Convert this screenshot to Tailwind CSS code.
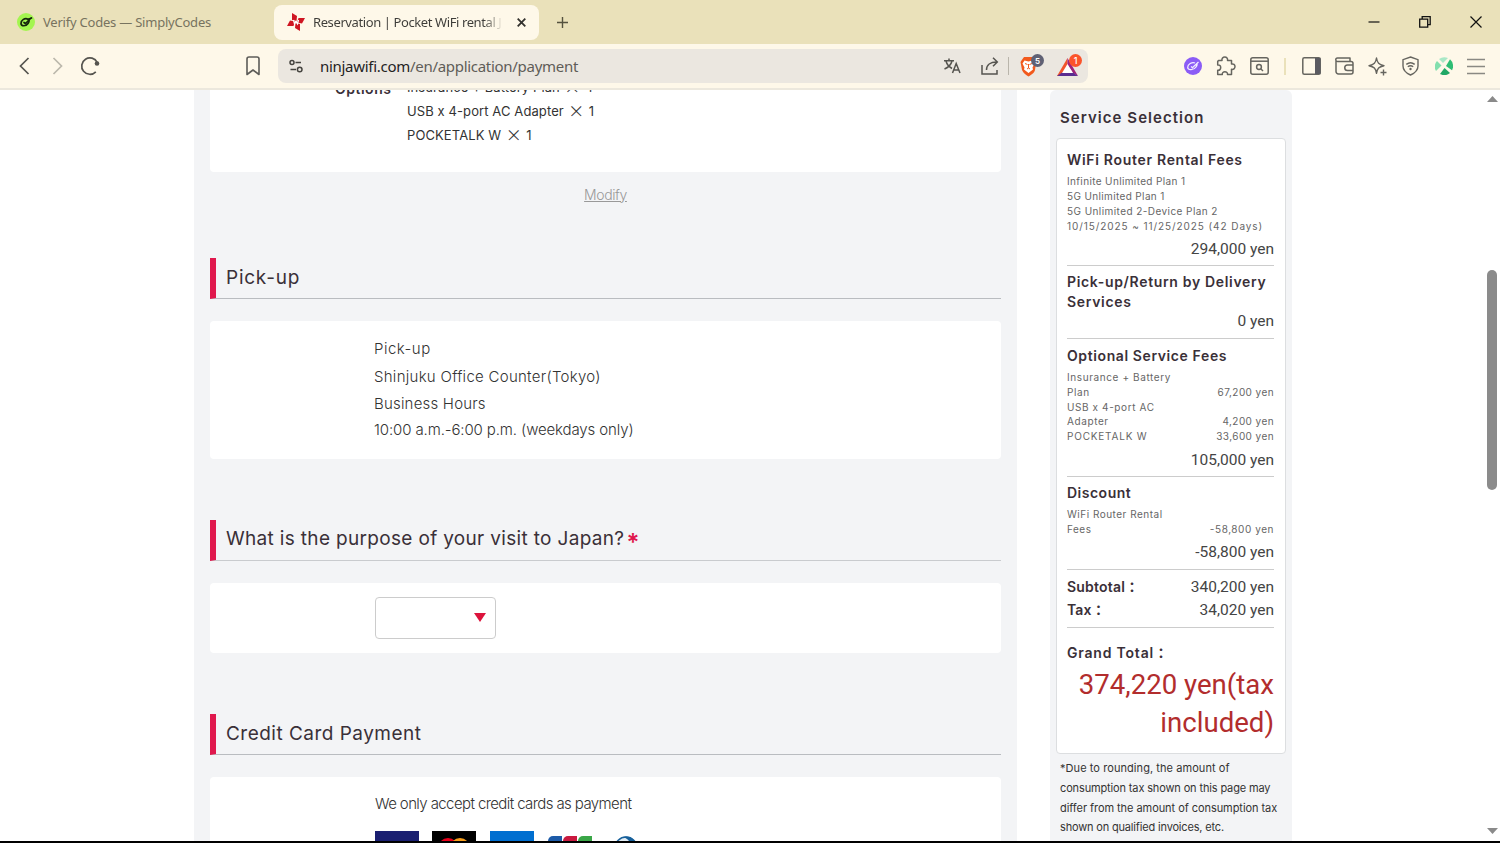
<!DOCTYPE html>
<html lang="en">
  <head>
    <meta charset="UTF-8" />
    <meta name="viewport" content="width=device-width, initial-scale=1.0" />
    <title>Reservation | Pocket WiFi rental Japan</title>
    <script src="https://cdn.jsdelivr.net/npm/@tailwindcss/browser@4"></script>
  </head>

  <body class="h-[843px] w-[1500px] overflow-hidden bg-white font-['Inter','Noto_Sans_CJK_JP',sans-serif]">
    <div class="flex h-[843px] flex-col border-b-2 border-black">

      <!-- Tab strip -->
      <div class="flex h-11 shrink-0 items-center bg-[#eae1ba] font-['Noto_Sans',sans-serif] text-[13px]">
        <div class="flex w-[274px] items-center pl-[17px]">
          <svg class="h-[18px] w-[18px]" viewBox="0 0 18 18">
            <circle cx="9" cy="9" r="9" fill="#a4f550" />
            <g fill="none" stroke="#15250c" stroke-width="1.7" stroke-linecap="round">
              <path d="M11 6.200C8 4.500 4 7 4 10.500c0 3 5 3 7 0 1-1.500 1.500-3 .5-4.300" />
              <path d="M7 9.500l1.500 1.200L14 5M12 6l2.500-1" />
            </g>
          </svg>
          <span class="ml-2 pt-px whitespace-nowrap tracking-[-0.22px] text-[#77735f]">Verify Codes — SimplyCodes</span>
        </div>
        <div class="flex h-[35px] w-[265px] items-center rounded-lg bg-[#fef8e9] pl-[13px]">
          <svg class="h-[18px] w-[18px]" viewBox="0 0 18 18">
            <g fill="#cf1522">
              <path d="M5 0l5 3-.5 5L5 7z" />
              <path d="M18 5l-3 5.500-5-1L11.500 5z" />
              <path d="M13 18l-5-3 .5-5 4.500 1z" />
              <path d="M0 13l3-5.500 5 1L6.500 13z" />
            </g>
            <path d="M6.500 7l1 4L9 8.500l1.500 2.500 1-4" fill="none" stroke="#fff" stroke-width="1.200" />
          </svg>
          <span class="ml-2 w-[190px] overflow-hidden pt-px whitespace-nowrap bg-linear-to-r from-[#3d3c38] from-90% to-transparent bg-clip-text tracking-[-0.4px] text-transparent">Reservation | Pocket WiFi rental J</span>
          <svg class="ml-[14px] h-[9px] w-[9px]" viewBox="0 0 9 9" stroke="#33322e" stroke-width="1.800"><path d="M.7.7l7.600 7.600M8.300.7L.7 8.300" /></svg>
        </div>
        <svg class="ml-[18px] h-[11px] w-[11px]" viewBox="0 0 11 11" stroke="#55523f" stroke-width="1.400"><path d="M5.500 0v11M0 5.500h11" /></svg>
        <div class="ml-auto flex items-center gap-[39px] pr-[18px]">
          <svg class="h-3 w-3" viewBox="0 0 12 12" stroke="#111" stroke-width="1.200"><path d="M.5 6h11" /></svg>
          <svg class="h-3 w-3" viewBox="0 0 12 12" fill="none" stroke="#111" stroke-width="1.300"><path d="M.7 3.200h8v8h-8zM3.200 3V.7h8v8H9" /></svg>
          <svg class="h-3 w-3" viewBox="0 0 12 12" stroke="#111" stroke-width="1.200"><path d="M.5.5l11 11M11.500.5l-11 11" /></svg>
        </div>
      </div>

      <!-- Toolbar -->
      <div class="flex h-[46px] shrink-0 items-center border-b-2 border-[#ece8dd] bg-[#fef8e9]">
        <div class="flex w-[278px] items-center">
          <svg class="ml-[19px] h-5 w-[11px]" viewBox="0 0 11 20" fill="none" stroke="#55544f" stroke-width="1.700"><path d="M9.500 2l-8 8 8 8" /></svg>
          <svg class="ml-[22px] h-5 w-[11px]" viewBox="0 0 11 20" fill="none" stroke="#bcb8ac" stroke-width="1.700"><path d="M1.500 2l8 8-8 8" /></svg>
          <svg class="ml-[17px] h-5 w-5" viewBox="0 0 20 20" fill="none" stroke="#55544f" stroke-width="1.700"><path d="M15.800 15.800A8.200 8.200 0 1 1 17.300 6.500" /><circle cx="17" cy="7.500" r="2.300" fill="#55544f" stroke="none" /></svg>
          <svg class="ml-[146px] h-5 w-[14px]" viewBox="0 0 14 20" fill="none" stroke="#5d5c58" stroke-width="1.600" stroke-linejoin="round"><path d="M1 3a2 2 0 0 1 2-2h8a2 2 0 0 1 2 2v15.500L7 14l-6 4.500z" /></svg>
        </div>

        <!-- Address bar -->
        <div class="flex h-[34px] w-[810px] items-center rounded-lg bg-[#ebe7e0]">
          <svg class="ml-[11px] h-[14px] w-[14px]" viewBox="0 0 14 14" fill="none" stroke="#45443f" stroke-width="1.500"><circle cx="3" cy="3.500" r="2" /><path d="M6.500 3.500H12M1.500 10.500H7" /><circle cx="10.700" cy="10.500" r="2.300" /></svg>
          <span class="ml-[17px] whitespace-nowrap font-['Noto_Sans',sans-serif] text-[15px] tracking-[-0.29px] text-[#5f5d58]"><span class="text-[#24231f]">ninjawifi.com</span>/en/application/payment</span>
          <div class="ml-auto flex items-center">
            <svg class="h-4 w-[17px]" viewBox="0 0 17 16" fill="none" stroke="#55544f" stroke-width="1.500"><path d="M0 2.700h10M5 .5v2M2 3c1 4 3.500 6 6 7.500M8 3C7 7 4 9.500.5 11M8.500 15l3.700-9.500L16 15M9.800 12h5" /></svg>
            <svg class="ml-5 h-[18px] w-[18px]" viewBox="0 0 18 18" fill="none" stroke="#55544f" stroke-width="1.500"><path d="M1 8v9h15v-4M5.500 13c0-5 4-8 10-8M12 .8L16.300 5 12 9.200" /></svg>
            <div class="ml-[9px] h-[18px] w-px bg-[#b9b5ab]"></div>
            <div class="relative ml-[11px] h-6 w-[18px]">
              <svg class="h-6 w-[18px]" viewBox="0 0 18 24"><path d="M4 3h9l3 3 0 3-1 7c-.5 3-4 5-6.500 6.500C6 21 3 19 2 16L.500 8 1.800 6z" fill="#f25a1d" /><path d="M4.500 6.500l4 1 4-1 2 3-2 4 .5 2-4.500 3.500L4 15.500l.5-2-2-4z" fill="#fff" /><path d="M5 9.500l2.500 1M12 9.500l-2.500 1M8.500 10v4l-1.500 1M8.500 14l1.500 1" stroke="#f25a1d" fill="none" /></svg>
              <span class="absolute top-0 left-[11px] flex h-[13px] w-[13px] items-center justify-center rounded-full bg-[#5f6174] text-[8px] font-semibold text-white">5</span>
            </div>
            <div class="relative mr-[10px] ml-[19px] h-6 w-[21px]">
              <svg class="h-6 w-[21px]" viewBox="0 0 21 24"><path d="M10.500 4L0 22h5l5.500-10z" fill="#f2552c" /><path d="M10.500 4L21 22l-5-3-5.500-8z" fill="#a0237a" /><path d="M0 22h21l-5-3.500H5z" fill="#5a2d91" /><path d="M10.500 10L5 19h11z" fill="#fff" /></svg>
              <span class="absolute top-0 left-[12px] flex h-[13px] w-[13px] items-center justify-center rounded-full bg-[#fb542b] text-[9px] font-medium text-white">1</span>
            </div>
          </div>
        </div>

        <!-- Extensions -->
        <div class="ml-auto flex items-center pr-[15px]">
          <svg class="h-[18px] w-[18px]" viewBox="0 0 18 18"><circle cx="9" cy="9" r="9" fill="#8b5cf6" /><path d="M11 6C8 4.500 3.500 7.500 3.700 10.500c.3 3 6 3 8.300-.5 1-1.500 1.500-3 .5-3.800M7 9.500l1.500 1.200L14.500 5" fill="none" stroke="#f3edff" stroke-width="1.300" /></svg>
          <svg class="ml-[14px] h-[21px] w-5" viewBox="0 0 20 21" fill="none" stroke="#66655f" stroke-width="1.500" stroke-linejoin="round"><path d="M2.500 4.500H6C5.500 2.500 7 1 8.800 1s3.200 1.500 2.700 3.500h4V8c2-.5 3.500.8 3.500 2.600s-1.500 3.200-3.500 2.700v5.200h-4c.3-1.800-1-2.800-2.600-2.800S6 16.700 6.300 18.500H1.700v-4.300c2 .3 3-1 3-2.600s-1-2.900-3-2.600V5.500z" /></svg>
          <svg class="ml-[14px] h-[18px] w-[19px]" viewBox="0 0 19 18" fill="none" stroke="#66655f" stroke-width="1.500"><rect x=".8" y=".8" width="17.400" height="16.400" rx="2" /><path d="M1 4.200h17" /><circle cx="9" cy="10" r="2.400" /><path d="M11 12l2 2" /></svg>
          <div class="ml-[15px] h-[17px] w-[2px] bg-[#eae1ba]"></div>
          <svg class="ml-4 h-[18px] w-[19px]" viewBox="0 0 19 18"><rect x=".8" y=".8" width="17.400" height="16.400" rx="1.500" fill="none" stroke="#66655f" stroke-width="1.500" /><path d="M13 1h5.500v16H13z" fill="#5a5a60" /></svg>
          <svg class="ml-[14px] h-[18px] w-[19px]" viewBox="0 0 19 18" fill="none" stroke="#66655f" stroke-width="1.500" stroke-linejoin="round"><path d="M1 3v11.500A2.500 2.500 0 0 0 3.500 17H16a2 2 0 0 0 2-2V6.500a2 2 0 0 0-2-2H2.500A1.500 1.500 0 0 1 2.500 1H15v3M18 8h-5.500a2.500 2.500 0 0 0 0 5.500H18" /></svg>
          <svg class="ml-[14px] h-[19px] w-[19px]" viewBox="0 0 19 19" fill="none" stroke="#66655f" stroke-width="1.400" stroke-linejoin="round"><path d="M8.500 1c.8 5 2.300 6.500 7.500 7.700-5.200 1-6.700 2.600-7.500 7.600C7.700 11.300 6.200 9.700 1 8.700 6.200 7.500 7.700 6 8.500 1zM15.500 12.500v6M12.500 15.500h6" /></svg>
          <svg class="ml-[15px] h-5 w-[17px]" viewBox="0 0 17 20" fill="none" stroke="#66655f" stroke-width="1.400"><path d="M8.500 1l7.500 2.700V10c0 4-3 7-7.500 9C4 17 1 14 1 10V3.700zM4.300 8.400c2.500-2 6-2 8.400 0M5.800 10.800c1.600-1.300 3.800-1.300 5.400 0" /><circle cx="8.500" cy="13" r="1.200" fill="#66655f" stroke="none" /></svg>
          <svg class="ml-4 h-[18px] w-[18px]" viewBox="0 0 18 18"><path d="M4 2a9 9 0 0 1 9-1L8 6z" fill="#a9e8c6" /><path d="M15 2.300a9 9 0 0 1 2 11L11 9z" fill="#2fbd74" /><path d="M9.500 11l5.500 5a9 9 0 0 1-10 1z" fill="#20a866" /><path d="M2 4l4.500 4.500L1 14a9 9 0 0 1 1-10z" fill="#83dfae" /></svg>
          <svg class="ml-[14px] h-[17px] w-[18px]" viewBox="0 0 18 17" stroke="#8a8983" stroke-width="1.700"><path d="M0 1.500h18M0 8.500h18M0 15.500h18" /></svg>
        </div>
      </div>

      <!-- Page -->
      <div class="flex min-h-0 flex-1 overflow-hidden text-[#333]">
        <main class="ml-[194px] w-[823px] shrink-0 bg-[#f3f4f6] px-4">
          <div class="h-[82px] overflow-hidden rounded-b bg-white">
            <div class="-mt-[15px] flex text-[13px] leading-[24px]">
              <div class="w-[197px] pl-[125px] text-sm leading-[27px] font-semibold tracking-[0.5px] text-[#3a3038]">Options</div>
              <div class="whitespace-nowrap tracking-[0.1px]">
                <p>Insurance + Battery Plan<span class="inline-block h-6 w-[25px] text-center align-top text-2xl leading-[22px] font-extralight">×</span>4</p>
                <p>USB x 4-port AC Adapter<span class="inline-block h-6 w-[25px] text-center align-top text-2xl leading-[22px] font-extralight">×</span>1</p>
                <p>POCKETALK W<span class="inline-block h-6 w-[25px] text-center align-top text-2xl leading-[22px] font-extralight">×</span>1</p>
              </div>
            </div>
          </div>
          <div class="mt-[11px] text-center text-sm leading-6 font-light tracking-[-0.4px] text-[#999] underline">Modify</div>

          <h2 class="mt-[51px] h-[41px] border-b border-l-6 border-b-[#b9bcc0] border-l-[#e0184d] pl-[10px] text-[19px] leading-[39px] tracking-[0.75px] text-[#3a3038]">Pick-up</h2>
          <div class="mt-[22px] h-[138px] rounded bg-white pt-[14px] pl-[164px] text-[15px] leading-[27px] font-light">
            <p class="tracking-[0.5px]">Pick-up</p>
            <p class="pt-px tracking-[0.28px]">Shinjuku Office Counter(Tokyo)</p>
            <p class="tracking-[0.2px]">Business Hours</p>
            <p class="leading-[26px] tracking-[-0.12px]">10:00 a.m.-6:00 p.m. (weekdays only)</p>
          </div>

          <h2 class="mt-[61px] flex h-[41px] border-b border-l-6 border-b-[#c9cbce] border-l-[#e0184d] pl-[10px] text-[19px] leading-[38px] tracking-[0.33px] text-[#3a3038]">What is the purpose of your visit to Japan?<span class="ml-0.5 pt-[3px] text-2xl leading-[39px] font-semibold text-[#e0184d]">*</span></h2>
          <div class="mt-[22px] h-[70px] rounded bg-white pt-[14px] pl-[165px]">
            <div class="flex h-[42px] w-[121px] items-center justify-end rounded border border-[#ccc] pr-[9px] pb-px">
              <svg class="h-[9px] w-3" viewBox="0 0 12 9" fill="#dc143c"><path d="M0 0h12L6 9z" /></svg>
            </div>
          </div>

          <h2 class="mt-[61px] h-[41px] border-b border-l-6 border-b-[#b9bcc0] border-l-[#e0184d] pl-[10px] text-[19px] leading-[39px] tracking-[0.48px] text-[#3a3038]">Credit Card Payment</h2>
          <div class="mt-[22px] h-[200px] rounded bg-white pt-[13px] pl-[165px]">
            <p class="text-[15px] leading-[27px] font-light tracking-[-0.6px]">We only accept credit cards as payment</p>
            <div class="mt-[14px] flex gap-[13px]">
              <div class="h-7 w-11 bg-[#1a1f71]"></div>
              <svg class="h-7 w-11" viewBox="0 0 44 28"><path d="M0 0h44v28H0z" /><circle cx="16" cy="17" r="10" fill="#eb001b" /><circle cx="28" cy="17" r="10" fill="#f79e1b" /></svg>
              <div class="ml-px h-7 w-11 bg-[#016fd0]"></div>
              <svg class="ml-px h-7 w-11" viewBox="0 0 44 28"><path d="M5 5h9v22H0V10a5 5 0 0 1 5-5z" fill="#1d5ba8" /><path d="M20 5h9v22H15V10a5 5 0 0 1 5-5z" fill="#c9193f" /><path d="M35 5h9v22H30V10a5 5 0 0 1 5-5z" fill="#3aa647" /></svg>
              <svg class="h-7 w-11" viewBox="0 0 44 28"><circle cx="21" cy="17" r="11" fill="#e4eef5" stroke="#17609b" stroke-width="1.500" /><path d="M18 6a11 11 0 0 1 14 11h-6c0-5-2-9-8-11z" fill="#17609b" /></svg>
            </div>
          </div>
        </main>

        <!-- Service selection -->
        <aside class="ml-[33px] h-[800px] w-[242px] shrink-0 rounded-t-md bg-[#f3f4f6] px-[6px] text-[#3a3038]">
          <h3 class="h-12 pt-[18px] pl-1 text-[15px] leading-5 font-semibold tracking-[1.050px]">Service Selection</h3>
          <div class="h-[616px] w-[230px] rounded border border-[#dcdee0] bg-white pr-[11px] pl-[10px]">
            <section class="h-[127px] border-b border-[#ccc] pt-[11px]">
              <h4 class="text-sm leading-5 font-semibold tracking-[0.7px] whitespace-nowrap">WiFi Router Rental Fees</h4>
              <div class="mt-1 text-[10px] leading-[15px] whitespace-nowrap text-[#666]">
                <p class="tracking-[0.36px]">Infinite Unlimited Plan 1</p>
                <p class="tracking-[0.36px]">5G Unlimited Plan 1</p>
                <p class="tracking-[0.43px]">5G Unlimited 2-Device Plan 2</p>
                <p class="tracking-[0.92px]">10/15/2025 ~ 11/25/2025 (42 Days)</p>
              </div>
              <p class="mt-[3px] text-right font-['Roboto'] text-[15.500px] leading-[25px] text-[#444]">294,000 yen</p>
            </section>
            <section class="h-[73px] border-b border-[#ccc] pt-[6px]">
              <h4 class="text-sm leading-5 font-semibold tracking-[0.67px] whitespace-nowrap">Pick-up/Return by Delivery<br />Services</h4>
              <p class="-mt-[3px] text-right font-['Roboto'] text-[15.500px] leading-6 text-[#444]">0 yen</p>
            </section>
            <section class="h-[138px] border-b border-[#ccc] pt-[7px]">
              <h4 class="text-sm leading-5 font-semibold tracking-[0.6px]">Optional Service Fees</h4>
              <div class="mt-1 grid grid-cols-[1fr_auto] items-end text-[10px] leading-[14.800px] whitespace-nowrap text-[#666]">
                <p class="tracking-[0.6px]">Insurance + Battery<br />Plan</p><p class="text-right tracking-[0.42px]">67,200 yen</p>
                <p class="tracking-[0.6px]">USB x 4-port AC<br />Adapter</p><p class="text-right tracking-[0.42px]">4,200 yen</p>
                <p class="tracking-[0.8px]">POCKETALK W</p><p class="text-right tracking-[0.42px]">33,600 yen</p>
              </div>
              <p class="mt-1 text-right font-['Roboto'] text-[15.500px] leading-[25px] text-[#444]">105,000 yen</p>
            </section>
            <section class="h-[93px] border-b border-[#ccc] pt-[6px]">
              <h4 class="text-sm leading-5 font-semibold tracking-[0.5px]">Discount</h4>
              <div class="mt-1 flex items-end justify-between text-[10px] leading-[14.800px] text-[#666]">
                <p class="tracking-[0.5px]">WiFi Router Rental<br />Fees</p><p class="tracking-[0.55px]">-58,800 yen</p>
              </div>
              <p class="mt-[3px] text-right font-['Roboto'] text-[15.500px] leading-[25px] text-[#444]">-58,800 yen</p>
            </section>
            <section class="h-[58px] border-b border-[#ccc] pt-[5px] text-[15.500px] leading-[23px]">
              <div class="flex h-[23px] justify-between"><h4 class="text-sm leading-[23px] font-semibold tracking-[0.2px]">Subtotal：</h4><p class="pt-px font-['Roboto'] text-[#444]">340,200 yen</p></div>
              <div class="flex h-[23px] justify-between"><h4 class="text-sm leading-[23px] font-semibold tracking-[0.1px]">Tax：</h4><p class="pt-px font-['Roboto'] text-[#444]">34,020 yen</p></div>
            </section>
            <section class="pt-[15px]">
              <h4 class="text-sm leading-5 font-semibold tracking-[0.8px]">Grand Total：</h4>
              <p class="mt-[3px] text-right font-['Roboto'] text-[27.600px] leading-[38px] text-[#b22d2d]">374,220 yen(tax<br />included)</p>
            </section>
          </div>
          <div class="mt-[5px] pl-1 text-[11px] leading-[19.800px] whitespace-nowrap text-[#333]">
            <p class="tracking-[0.07px]">*Due to rounding, the amount of</p>
            <p class="tracking-[-0.14px]">consumption tax shown on this page may</p>
            <p class="tracking-[-0.06px]">differ from the amount of consumption tax</p>
            <p class="tracking-[-0.17px]">shown on qualified invoices, etc.</p>
          </div>
        </aside>

        <!-- Scrollbar -->
        <div class="ml-auto flex w-4 flex-col items-center pt-[6px]">
          <svg class="h-[6px] w-[11px]" viewBox="0 0 11 6" fill="#8a8a8a"><path d="M5.500 0L11 6H0z" /></svg>
          <div class="mt-[168px] h-[220px] w-[10px] rounded-full bg-[#8b8b8b]"></div>
          <svg class="mt-[338px] h-[6px] w-[11px]" viewBox="0 0 11 6" fill="#8a8a8a"><path d="M0 0h11L5.500 6z" /></svg>
        </div>
      </div>
    </div>
  </body>
</html>
